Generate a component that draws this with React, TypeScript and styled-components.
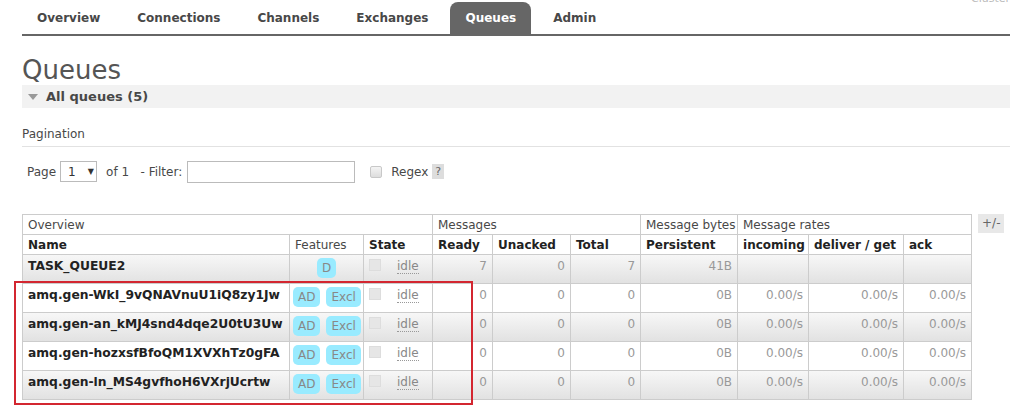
import React from 'react'
import styled, { createGlobalStyle } from 'styled-components'

const GlobalStyle = createGlobalStyle`
    html, body {
        margin: 0;
        padding: 0;
        background: #fff;
        font-family: 'DejaVu Sans', Verdana, sans-serif;
        color: #484848;
    }
`

const Page = styled.div`
    position: relative;
    width: 1010px;
    height: 409px;
    overflow: hidden;
    padding-left: 22px;
    box-sizing: border-box;
`

const Corner = styled.div`
    position: absolute;
    top: -8px;
    right: 0;
    font-size: 11px;
    color: #bbb;
    white-space: nowrap;
`

const Nav = styled.ul`
    display: flex;
    margin: 2px 0 0;
    padding: 0;
    list-style: none;
    border-bottom: 2px solid #666;
`

const Tab = styled.li<{ $active?: boolean }>`
    height: 32px;
    line-height: 32px;
    padding: 0 15px;
    margin-right: 7px;
    font-size: 12px;
    font-weight: bold;
    border-radius: 8px 8px 0 0;
    color: ${({ $active }) => ($active ? '#fff' : '#484848')};
    background: ${({ $active }) => ($active ? '#666' : 'transparent')};
`

const Title = styled.h1`
    margin: 19px 0 0;
    font-size: 26px;
    line-height: 30px;
    font-weight: normal;
    color: #555;
`

const SectionBar = styled.div`
    display: flex;
    align-items: center;
    gap: 8px;
    height: 23px;
    padding-left: 6px;
    background: #f2f2f2;
    font-size: 13px;
    font-weight: bold;
    color: #484848;
`

const Triangle = styled.span`
    width: 0;
    height: 0;
    border-left: 5px solid transparent;
    border-right: 5px solid transparent;
    border-top: 6px solid #999;
`

const SubHeading = styled.div`
    margin-top: 18px;
    padding-bottom: 4px;
    font-size: 12px;
    line-height: 16px;
    border-bottom: 1px solid #e2e2e2;
`

const Controls = styled.div`
    display: flex;
    align-items: center;
    height: 23px;
    margin: 13px 0 0 5px;
    font-size: 12px;
`

const Select = styled.div`
    display: flex;
    align-items: center;
    gap: 12px;
    height: 21px;
    width: 37px;
    box-sizing: border-box;
    margin: 0 9px 0 4px;
    padding-left: 7px;
    border: 1px solid #bbb;
    font-size: 12px;
    color: #333;

    &::after {
        content: '▼';
        font-size: 8px;
    }
`

const Input = styled.div`
    width: 168px;
    height: 22px;
    box-sizing: border-box;
    margin: 0 15px 0 5px;
    border: 1px solid #bbb;
`

const Check = styled.span`
    width: 10px;
    height: 10px;
    margin-right: 9px;
    border: 1px solid #c8c8c8;
    border-radius: 2px;
    background: linear-gradient(#f4f4f4, #ddd);
`

const Help = styled.span`
    margin-left: 4px;
    padding: 1px 3px;
    background: #ddd;
    color: #666;
    font-size: 11px;
`

const TableWrap = styled.div`
    display: flex;
    align-items: flex-start;
    gap: 6px;
    margin-top: 31px;
`

const Table = styled.table`
    width: 949px;
    border-collapse: collapse;
    font-size: 12px;
    table-layout: fixed;

    th, td {
        border: 1px solid #ccc;
        padding: 0 5px;
        white-space: nowrap;
        overflow: hidden;
    }
`

const GroupCell = styled.th`
    height: 19px;
    font-weight: normal;
    text-align: left;
    color: #484848;
`

const HeadCell = styled.th<{ $light?: boolean }>`
    height: 19px;
    text-align: left;
    font-weight: ${({ $light }) => ($light ? 'normal' : 'bold')};
    color: ${({ $light }) => ($light ? '#484848' : '#222')};
`

const Row = styled.tr<{ $alt?: boolean }>`
    height: 29px;
    background: ${({ $alt }) => ($alt ? 'linear-gradient(#f7f7f7, #e1e1e1)' : '#fff')};

    td {
        vertical-align: top;
        padding-top: 4px;
    }
`

const NameCell = styled.td`
    font-weight: bold;
    color: #222;
    font-size: 12.3px;
`

const NumCell = styled.td`
    text-align: right;
    color: #999;
`

const FeatureCell = styled.td`
    text-align: center;
    td& {
        padding: 3px 0 0;
    }
`

const Badge = styled.span`
    display: inline-block;
    height: 20px;
    line-height: 21px;
    padding: 0 5px;
    margin: 0 3px;
    border-radius: 5px;
    background: #99ebff;
    color: #888;
    font-size: 12px;
`

const StateCell = styled.td`
    color: #888;
`

const StateBox = styled.span`
    display: inline-block;
    width: 10px;
    height: 10px;
    margin: 0 16px 0 0;
    vertical-align: -1px;
    background: #e6e6e6;
    border: 1px solid #ddd;
`

const Idle = styled.span`
    border-bottom: 1px dotted #999;
`

const Toggle = styled.span`
    height: 19px;
    line-height: 18px;
    padding: 0 4px;
    background: #e8e8e8;
    color: #666;
    font-size: 12px;
`

const Highlight = styled.div`
    position: absolute;
    left: 14px;
    top: 281px;
    width: 459px;
    height: 124px;
    box-sizing: border-box;
    border: 2px solid #d32630;
`

const tabs = ['Overview', 'Connections', 'Channels', 'Exchanges', 'Queues', 'Admin']

const queues = [
    { name: 'TASK_QUEUE2', features: ['D'], ready: 7, unacked: 0, total: 7, bytes: '41B', rates: false },
    { name: 'amq.gen-WkI_9vQNAVnuU1iQ8zy1Jw', features: ['AD', 'Excl'], ready: 0, unacked: 0, total: 0, bytes: '0B', rates: true },
    { name: 'amq.gen-an_kMJ4snd4dqe2U0tU3Uw', features: ['AD', 'Excl'], ready: 0, unacked: 0, total: 0, bytes: '0B', rates: true },
    { name: 'amq.gen-hozxsfBfoQM1XVXhTz0gFA', features: ['AD', 'Excl'], ready: 0, unacked: 0, total: 0, bytes: '0B', rates: true },
    { name: 'amq.gen-ln_MS4gvfhoH6VXrjUcrtw', features: ['AD', 'Excl'], ready: 0, unacked: 0, total: 0, bytes: '0B', rates: true },
]

// column widths read off the reference
const widths = [267, 74, 69, 60, 78, 70, 97, 71, 95, 68]

export default function App() {
    return (
        <Page>
            <GlobalStyle />
            <Corner>Cluster</Corner>
            <Nav>
                {tabs.map(t => (
                    <Tab key={t} $active={t === 'Queues'}>
                        {t}
                    </Tab>
                ))}
            </Nav>

            <Title>Queues</Title>
            <SectionBar>
                <Triangle />
                All queues (5)
            </SectionBar>

            <SubHeading>Pagination</SubHeading>
            <Controls>
                Page
                <Select>1</Select>
                of 1&nbsp;&nbsp; - Filter:
                <Input />
                <Check />
                Regex
                <Help>?</Help>
            </Controls>

            <TableWrap>
                <Table>
                    <colgroup>
                        {widths.map((w, i) => (
                            <col key={i} style={{ width: w }} />
                        ))}
                    </colgroup>
                    <thead>
                        <tr>
                            <GroupCell colSpan={3}>Overview</GroupCell>
                            <GroupCell colSpan={3}>Messages</GroupCell>
                            <GroupCell>Message bytes</GroupCell>
                            <GroupCell colSpan={3}>Message rates</GroupCell>
                        </tr>
                        <tr>
                            <HeadCell>Name</HeadCell>
                            <HeadCell $light>Features</HeadCell>
                            <HeadCell>State</HeadCell>
                            <HeadCell>Ready</HeadCell>
                            <HeadCell>Unacked</HeadCell>
                            <HeadCell>Total</HeadCell>
                            <HeadCell>Persistent</HeadCell>
                            <HeadCell>incoming</HeadCell>
                            <HeadCell>deliver / get</HeadCell>
                            <HeadCell>ack</HeadCell>
                        </tr>
                    </thead>
                    <tbody>
                        {queues.map((q, i) => (
                            <Row key={q.name} $alt={i % 2 === 0}>
                                <NameCell>{q.name}</NameCell>
                                <FeatureCell>
                                    {q.features.map(f => (
                                        <Badge key={f}>{f}</Badge>
                                    ))}
                                </FeatureCell>
                                <StateCell>
                                    <StateBox />
                                    <Idle>idle</Idle>
                                </StateCell>
                                <NumCell>{q.ready}</NumCell>
                                <NumCell>{q.unacked}</NumCell>
                                <NumCell>{q.total}</NumCell>
                                <NumCell>{q.bytes}</NumCell>
                                <NumCell>{q.rates ? '0.00/s' : ''}</NumCell>
                                <NumCell>{q.rates ? '0.00/s' : ''}</NumCell>
                                <NumCell>{q.rates ? '0.00/s' : ''}</NumCell>
                            </Row>
                        ))}
                    </tbody>
                </Table>
                <Toggle>+/-</Toggle>
            </TableWrap>

            <Highlight />
        </Page>
    )
}
